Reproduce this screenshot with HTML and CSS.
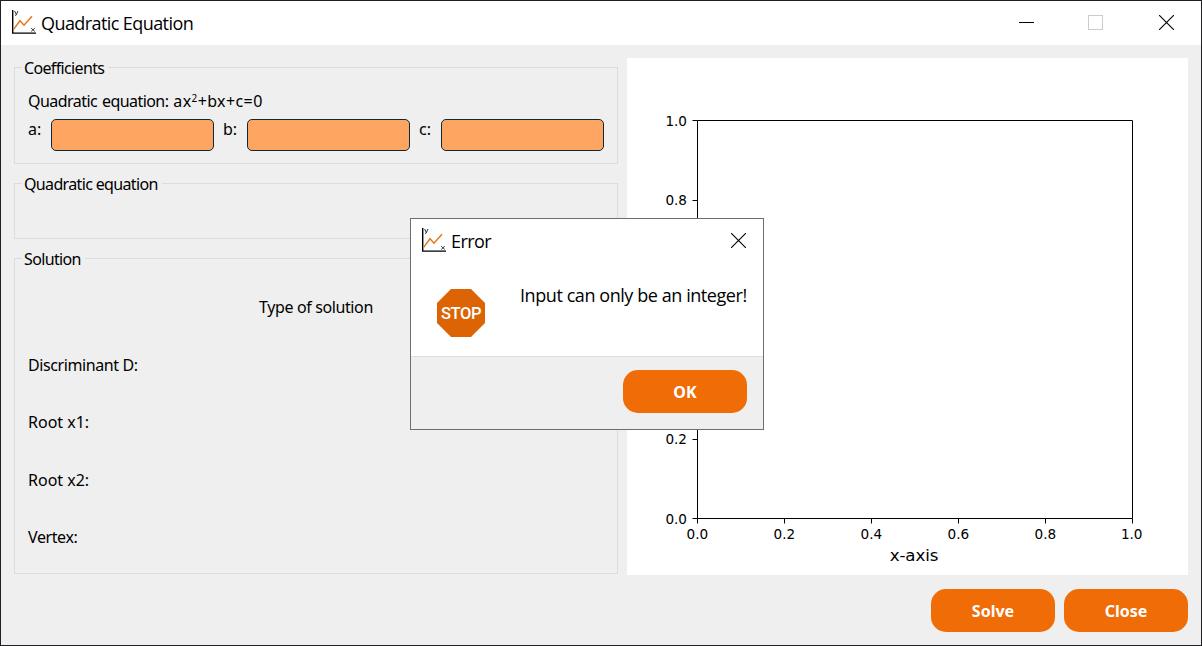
FILE: index.html
```html
<!DOCTYPE html>
<html lang="en">
<head>
<meta charset="utf-8">
<title>Quadratic Equation</title>
<link rel="stylesheet" href="styles.css">
</head>
<body>
<div class="window">
  <header class="titlebar">
    <svg class="app-icon" viewBox="0 0 24 24">
      <path d="M.7 0V23.3M0 23.1H24" fill="none" stroke="#000" stroke-width="1.4"/>
      <path d="M1.6 19.4L8 10.8L12 15.2L20 6.2" fill="none" stroke="#e5761c" stroke-width="1.5"/>
      <path d="M2.6 1L4.2 4.2M6 1L4.1 5.2H3M19.2 18.2L22.8 21.4M22.8 18.2L19.2 21.4" fill="none" stroke="#333"/>
    </svg>
    <h1 class="title">Quadratic Equation</h1>
    <div class="controls">
      <svg width="15" height="15"><path d="M0 7.5H15" stroke="#000"/></svg>
      <svg width="15" height="15"><rect x=".5" y=".5" width="14" height="14" fill="none" stroke="#ccc"/></svg>
      <svg width="15" height="15"><path d="M0 0L15 15M15 0L0 15" stroke="#000" stroke-width="1.1"/></svg>
    </div>
  </header>
  <main class="content">
    <div class="left">
      <section class="group coefficients">
        <h2 class="legend">Coefficients</h2>
        <p class="formula">Quadratic equation: <span class="math">ax<span class="sq">2</span>+bx+c=0</span></p>
        <div class="inputs">
          <label class="lab-a" for="a">a:</label><input id="a" class="field">
          <label class="lab-b" for="b">b:</label><input id="b" class="field">
          <label class="lab-c" for="c">c:</label><input id="c" class="field">
        </div>
      </section>
      <section class="group equation">
        <h2 class="legend">Quadratic equation</h2>
      </section>
      <section class="group solution">
        <h2 class="legend">Solution</h2>
        <p class="type">Type of solution</p>
        <div class="results">
          <p>Discriminant D:</p>
          <p class="root">Root x1:</p>
          <p class="root">Root x2:</p>
          <p>Vertex:</p>
        </div>
      </section>
    </div>
    <svg class="plot" width="561" height="517">
      <path d="M70.5 62.5H505.5V460.5H70.5ZM65.5 62.5H70.5M65.5 142.5H70.5M65.5 381.5H70.5M65.5 460.5H70.5M70.5 460.5V465.5M157.5 460.5V465.5M244.5 460.5V465.5M331.5 460.5V465.5M418.5 460.5V465.5M505.5 460.5V465.5" fill="none" stroke="#000"/>
      <g class="tick-y">
        <text x="60" y="68">1.0</text><text x="60" y="147">0.8</text>
        <text x="60" y="386">0.2</text><text x="60" y="466">0.0</text>
      </g>
      <g class="tick-x">
        <text x="70.3" y="481">0.0</text><text x="157.3" y="481">0.2</text><text x="244.3" y="481">0.4</text>
        <text x="331.3" y="481">0.6</text><text x="418.3" y="481">0.8</text><text x="504.7" y="481">1.0</text>
      </g>
      <text class="axis-name" x="287" y="503">x-axis</text>
    </svg>
  </main>
  <footer class="actions">
    <button class="btn">Solve</button>
    <button class="btn">Close</button>
  </footer>
</div>
<div class="dialog" role="dialog">
  <div class="dialog-title">
    <svg class="app-icon" viewBox="0 0 24 24">
      <path d="M.7 0V23.3M0 23.1H24" fill="none" stroke="#000" stroke-width="1.4"/>
      <path d="M1.6 19.4L8 10.8L12 15.2L20 6.2" fill="none" stroke="#e5761c" stroke-width="1.5"/>
      <path d="M2.6 1L4.2 4.2M6 1L4.1 5.2H3M19.2 18.2L22.8 21.4M22.8 18.2L19.2 21.4" fill="none" stroke="#333"/>
    </svg>
    <h2 class="title">Error</h2>
    <svg class="dialog-close" width="15" height="15"><path d="M0 0L15 15M15 0L0 15" stroke="#000" stroke-width="1.1"/></svg>
  </div>
  <div class="dialog-body">
    <svg class="stop" width="48" height="48" viewBox="0 0 48 48">
      <path d="M14 0H34L48 14V34L34 48H14L0 34V14Z" fill="#dc6404"/>
      <text x="24" y="30" class="stop-text">STOP</text>
    </svg>
    <p class="message">Input can only be an integer!</p>
  </div>
  <div class="dialog-footer"><button class="btn btn-ok">OK</button></div>
</div>
</body>
</html>
```
FILE: styles.css
```css
* { box-sizing: border-box; margin: 0; padding: 0; }
body {
  width: 1202px;
  height: 646px;
  overflow: hidden;
  position: relative;
  font: 400 16px/20px "Noto Sans", sans-serif;
  letter-spacing: -0.4px;
  color: #000;
}
.window {
  height: 646px;
  border: 1px solid #201f23;
  background: #efefef;
  display: flex;
  flex-direction: column;
}
.titlebar {
  height: 44px;
  background: #fff;
  display: flex;
  align-items: center;
  padding: 0 27px 0 11px;
}
.app-icon { width: 24px; height: 24px; flex: none; }
.titlebar .app-icon { margin-bottom: 2px; }
.title {
  font: 400 18px/24px "Open Sans", sans-serif;
  letter-spacing: -0.58px;
  margin-left: 5px;
}
.controls { display: flex; margin: -2px 0 0 auto; }
.controls svg + svg { margin-left: 54px; }
.controls svg + svg + svg { margin-left: 56px; }
.content { display: flex; gap: 9px; padding: 13px 13px 0; height: 530px; }
.left { width: 604px; display: flex; flex-direction: column; gap: 19px; padding-top: 9px; }
.group { border: 1px solid #dcdcdc; padding: 0 13px; }
.coefficients { height: 97px; }
.equation { height: 56px; }
.solution { height: 316px; }
.legend {
  width: max-content;
  height: 20px;
  margin: -10px 0 0 -6px;
  padding: 0 4px 0 2px;
  background: #efefef;
  font: inherit;
  letter-spacing: -0.65px;
}
.formula { margin-top: 13px; letter-spacing: -0.55px; word-spacing: 1.2px; }
.math { letter-spacing: 0.4px; }
.sq { font-size: 10px; line-height: 0; vertical-align: 5px; }
.inputs { display: flex; margin-top: 8px; }
.lab-a { width: 23px; }
.lab-b { width: 33px; padding-left: 9px; }
.lab-c { width: 31px; padding-left: 9px; }
.inputs label { letter-spacing: 0; }
.field { width: 163px; height: 32px; border: 1px solid #0d2a33; border-radius: 5px; background: #ffa562; }
.type { text-align: center; margin-top: 28px; letter-spacing: -0.38px; }
.results { display: grid; grid-auto-rows: 57.4px; margin-top: 38px; }
.root { letter-spacing: 0; }
.plot { background: #fff; flex: none; font-family: "DejaVu Sans", sans-serif; letter-spacing: 0; }
.tick-x, .tick-y { font-size: 13.6px; }
.tick-x { text-anchor: middle; }
.tick-y { text-anchor: end; }
.axis-name { font-size: 16.67px; letter-spacing: -0.1px; text-anchor: middle; }
.actions { display: flex; justify-content: flex-end; gap: 9px; padding: 14px 13px 0; }
.btn {
  width: 124px;
  height: 43px;
  border: 0;
  border-radius: 15px;
  background: #f06c06;
  color: #fff;
  font: 700 16px/20px "Noto Sans", sans-serif;
  letter-spacing: 0;
}
.dialog {
  position: absolute;
  left: 410px;
  top: 218px;
  width: 354px;
  height: 212px;
  border: 1px solid #6e6e6e;
  background: #fff;
  display: flex;
  flex-direction: column;
}
.dialog-title { display: flex; height: 43px; padding: 9px 17px 0 11px; }
.dialog-title .title { margin-top: 1px; }
.dialog-close { margin: 5px 0 0 auto; }
.dialog-body { height: 94px; display: flex; padding: 27px 0 0 26px; }
.message {
  font: 400 18px/24px "Open Sans", sans-serif;
  letter-spacing: -0.43px;
  margin: -6px 0 0 35px;
  white-space: nowrap;
}
.stop-text { font: 500 16.5px Roboto, sans-serif; letter-spacing: -0.4px; fill: #fff; text-anchor: middle; }
.dialog-footer {
  flex: 1;
  background: #efefef;
  border-top: 1px solid #dfdfdf;
  padding: 13px 16px 0 0;
  display: flex;
  justify-content: flex-end;
}
```
